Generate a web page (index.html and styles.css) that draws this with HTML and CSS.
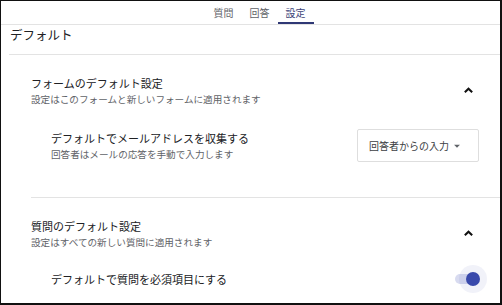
FILE: index.html
```html
<!DOCTYPE html>
<html lang="ja">
<head>
    <meta charset="UTF-8">
    <meta name="viewport" content="width=device-width, initial-scale=1.0">
    <title>設定</title>
    <link rel="stylesheet" href="styles.css">
</head>
<body>
    <nav class="tabs">
        <div class="tab">質問</div>
        <div class="tab">回答</div>
        <div class="tab active">設定</div>
    </nav>

    <div class="page-head">デフォルト</div>

    <section class="group">
        <div class="group-head">
            <div>
                <div class="title">フォームのデフォルト設定</div>
                <div class="sub">設定はこのフォームと新しいフォームに適用されます</div>
            </div>
            <svg class="caret" viewBox="0 0 12 12"><path d="M2 8L6 4l4 4"/></svg>
        </div>
        <div class="row">
            <div>
                <div class="row-title">デフォルトでメールアドレスを収集する</div>
                <div class="sub">回答者はメールの応答を手動で入力します</div>
            </div>
            <div class="select">
                <span>回答者からの入力</span>
                <svg viewBox="0 0 24 24"><path d="M7 10l5 5 5-5z"/></svg>
            </div>
        </div>
    </section>

    <section class="group last">
        <div class="group-head">
            <div>
                <div class="title">質問のデフォルト設定</div>
                <div class="sub">設定はすべての新しい質問に適用されます</div>
            </div>
            <svg class="caret" viewBox="0 0 12 12"><path d="M2 8L6 4l4 4"/></svg>
        </div>
        <div class="row toggle-row">
            <div class="row-title">デフォルトで質問を必須項目にする</div>
            <div class="switch"><span class="knob"></span></div>
        </div>
    </section>
</body>
</html>
```

FILE: styles.css
```css
:root {
    --text: #202124;
    --muted: #5f6368;
    --line: #e3e3e3;
    --accent: #3949ab;
}
body {
    margin: 0;
    width: 502px;
    height: 305px;
    box-sizing: border-box;
    border: 1px solid #111;
    border-right-width: 2px;
    border-bottom-width: 2px;
    background: #fff;
    color: var(--text);
    font-family: "Noto Sans CJK JP", "Noto Sans", sans-serif;
    overflow: hidden;
}

/* tabs */
.tabs {
    display: flex;
    justify-content: center;
    padding-left: 18px;
    height: 23px;
    border-bottom: 1px solid var(--line);
}
.tab {
    width: 36px;
    text-align: center;
    font-size: 10px;
    line-height: 23px;
    color: var(--muted);
    box-sizing: border-box;
}
.tab.active {
    color: #3c4277;
    border-bottom: 2px solid #2f3875;
}

.page-head {
    font-size: 12.5px;
    line-height: 16px;
    padding: 2px 0 11px 1px;
    margin-left: 8px;
    border-bottom: 1px solid var(--line);
}

/* sections */
.group {
    padding: 19px 0 35px 30px;
}
.group.last {
    border-top: 1px solid var(--line);
    margin-left: 30px;
    padding: 19px 0 0 0;
}
.group-head {
    display: flex;
    align-items: center;
    justify-content: space-between;
    padding-right: 26px;
}
.title {
    font-size: 11px;
    line-height: 18px;
}
.sub {
    font-size: 9.6px;
    line-height: 15px;
    color: var(--muted);
}
.caret {
    width: 11px;
    height: 11px;
    fill: none;
    stroke: #111;
    stroke-width: 2.2;
}

.row {
    display: flex;
    align-items: center;
    justify-content: space-between;
    margin-top: 22px;
    padding-left: 20px;
    padding-right: 21px;
}
.row-title {
    font-size: 11px;
    line-height: 18px;
}
.select {
    display: flex;
    align-items: center;
    justify-content: space-between;
    width: 122px;
    height: 33px;
    box-sizing: border-box;
    border: 1px solid #dedede;
    border-radius: 2px;
    padding: 0 14px 0 11px;
    font-size: 10px;
    color: #3c4043;
}
.select svg {
    width: 14px;
    height: 14px;
    fill: var(--muted);
}

.toggle-row {
    margin-top: 15px;
    padding-right: 13px;
}
.switch {
    position: relative;
    width: 28px;
    height: 28px;
}
.switch::before {
    content: "";
    position: absolute;
    left: -4px;
    top: 9px;
    width: 24px;
    height: 10px;
    border-radius: 5px;
    background: #d8dbf0;
}
.knob {
    position: absolute;
    left: 0;
    top: 0;
    width: 28px;
    height: 28px;
    border-radius: 50%;
    background: rgba(57, 73, 171, 0.07);
}
.knob::after {
    content: "";
    position: absolute;
    left: 7px;
    top: 7px;
    width: 14px;
    height: 14px;
    border-radius: 50%;
    background: var(--accent);
}
```
